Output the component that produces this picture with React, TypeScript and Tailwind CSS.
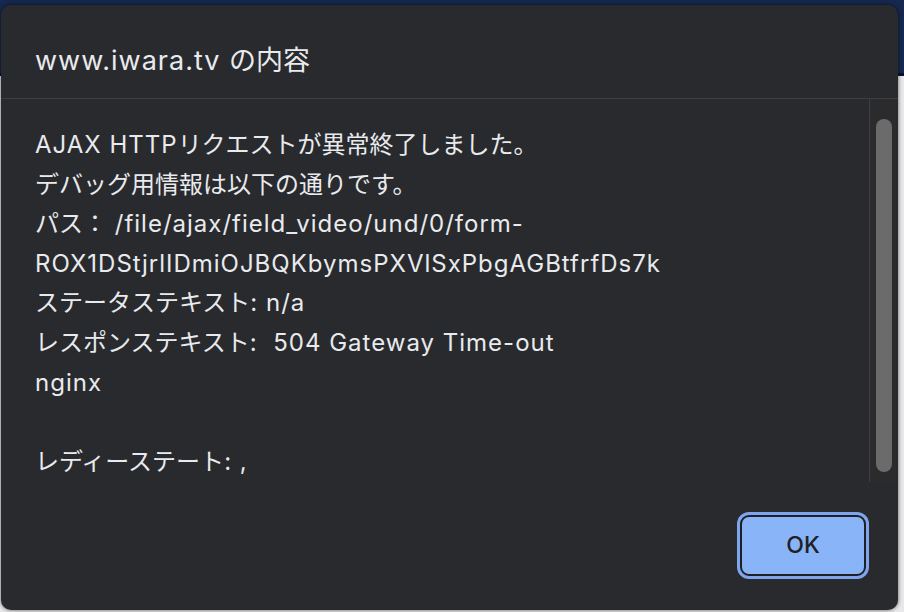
const lines = [
  "AJAX HTTPリクエストが異常終了しました。",
  "デバッグ用情報は以下の通りです。",
  "パス： /file/ajax/field_video/und/0/form-",
  "ROX1DStjrlIDmiOJBQKbymsPXVlSxPbgAGBtfrfDs7k",
  "ステータステキスト: n/a",
  "レスポンステキスト:  504 Gateway Time-out",
  "nginx",
  "",
  "レディーステート: ,",
];

// latin runs are a bit wider in the original, so give them some tracking
function Mixed({ text }: { text: string }) {
  const parts = text.split(/([\x20-\x7e]+)/).filter((p) => p !== "");
  return (
    <span className="whitespace-pre">
      {parts.map((p, i) =>
        /^[\x20-\x7e]+$/.test(p) ? (
          <span key={i} className="tracking-[1px]">
            {p}
          </span>
        ) : (
          <span key={i}>{p}</span>
        ),
      )}
    </span>
  );
}

export default function App() {
  return (
    <div
      className="relative w-[904px] h-[612px] overflow-hidden flex flex-col"
      style={{ fontFamily: 'Inter, "Noto Sans CJK JP", sans-serif' }}
    >
      {/* page behind the alert */}
      <div className="h-[76px] bg-[#16284f] border-b-[3px] border-[#0b1226]" />
      <div className="flex-1 bg-[#e9e9eb]" />

      {/* alert dialog */}
      <div className="absolute left-[1px] top-[5px] w-[897px] h-[605px] rounded-[10px] bg-[#292a2e] flex flex-col text-[#e8eaed] shadow-[0_0_4px_rgba(0,0,0,0.6)]">
        <div className="h-[93px] flex items-center pl-[34px] pt-[20px] text-[27px] text-[#e8eaed]">
          <Mixed text="www.iwara.tv の内容" />
        </div>

        <div className="flex h-[384px] border-t border-[#3d3e42]">
          <div className="flex-1 border-r border-[#3d3e42] pl-[34px] pt-[26px] text-[24px] leading-[39.6px] text-[#e8eaed] whitespace-pre">
            {lines.map((l, i) => (
              <div key={i} className="h-[39.6px]">
                <Mixed text={l} />
              </div>
            ))}
          </div>
          <div className="w-[28px] bg-[#2b2b2d] flex justify-center pt-[20px] pb-[8px]">
            <div className="w-[16px] h-[353px] rounded-full bg-[#6b6b6b]" />
          </div>
        </div>

        <div className="flex-1 flex justify-end items-start pr-[29px] pt-[30px]">
          <div className="rounded-[12px] bg-[#7ea5ee] p-[3px]">
            <button className="w-[126px] h-[61px] rounded-[9px] border-2 border-[#1f2024] bg-[#8ab4f8] text-[#202124] text-[23px] font-medium">
              OK
            </button>
          </div>
        </div>
      </div>
    </div>
  );
}
